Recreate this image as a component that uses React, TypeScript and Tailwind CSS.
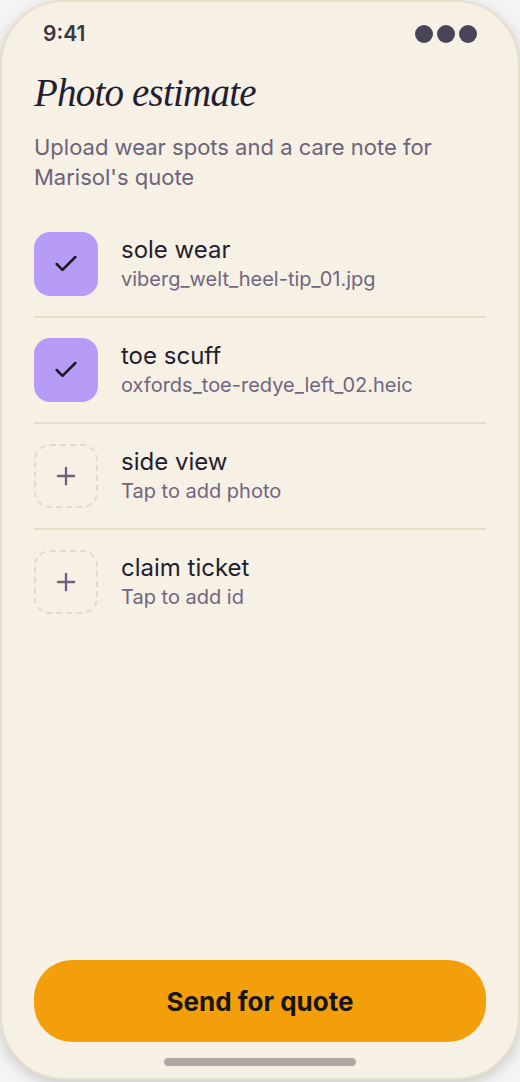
import { Check, Plus } from "lucide-react";

export default function App() {
  const items = [
    { title: "sole wear", sub: "viberg_welt_heel-tip_01.jpg", done: true },
    { title: "toe scuff", sub: "oxfords_toe-redye_left_02.heic", done: true },
    { title: "side view", sub: "Tap to add photo", done: false },
    { title: "claim ticket", sub: "Tap to add id", done: false },
  ];

  return (
    <div className="w-[520px] h-[1082px] bg-[#f4f4f4] font-['Inter',sans-serif]">
      <div className="w-[520px] h-[1080px] rounded-[64px] border-2 border-[#e6dfcb] bg-[#f7f0e5] shadow-[0_4px_14px_rgba(0,0,0,0.18)] flex flex-col overflow-hidden">
        {/* status bar */}
        <div className="flex items-center justify-between pl-[41px] pr-[41px] pt-[18px] h-[46px]">
          <span className="text-[21px] font-semibold text-[#3b3645]">9:41</span>
          <div className="flex gap-[4px]">
            <span className="w-[18px] h-[18px] rounded-full bg-[#4a4458]" />
            <span className="w-[18px] h-[18px] rounded-full bg-[#4a4458]" />
            <span className="w-[18px] h-[18px] rounded-full bg-[#4a4458]" />
          </div>
        </div>

        <div className="px-[32px] flex-1 flex flex-col">
          <h1 className="mt-[22px] font-['Liberation_Serif',serif] italic text-[39px] leading-[46px] text-[#221d33] tracking-[-0.8px]">
            Photo estimate
          </h1>
          <p className="mt-[16px] text-[22px] leading-[30px] text-[#6b6479]">
            Upload wear spots and a care note for Marisol's quote
          </p>

          <div className="mt-[20px] flex flex-col">
            {items.map((it, i) => (
              <div
                key={i}
                className={`flex items-center gap-[23px] py-[20px] ${i < items.length - 1 ? "border-b-2 border-[#e7dfcc]" : ""}`}
              >
                {it.done ? (
                  <div className="w-[64px] h-[64px] shrink-0 rounded-[16px] bg-[#b69cf6] flex items-center justify-center">
                    <Check className="w-[28px] h-[28px] text-[#1d1a26]" strokeWidth={2.2} />
                  </div>
                ) : (
                  <div className="w-[64px] h-[64px] shrink-0 rounded-[16px] border-2 border-dashed border-[#e4dacb] flex items-center justify-center">
                    <Plus className="w-[28px] h-[28px] text-[#6b6180]" strokeWidth={2} />
                  </div>
                )}
                <div className="flex flex-col">
                  <span className="text-[24px] leading-[30px] text-[#231e30]">{it.title}</span>
                  <span className="text-[20px] leading-[28px] text-[#6e6780]">{it.sub}</span>
                </div>
              </div>
            ))}
          </div>

          <div className="flex-1" />

          <button className="h-[82px] w-full rounded-[38px] bg-[#f39f0c] text-[26px] font-bold text-[#171412]">
            Send for quote
          </button>
          <div className="flex justify-center mt-[16px] mb-[12px]">
            <div className="w-[192px] h-[8px] rounded-full bg-[#aea8a4]" />
          </div>
        </div>
      </div>
    </div>
  );
}
